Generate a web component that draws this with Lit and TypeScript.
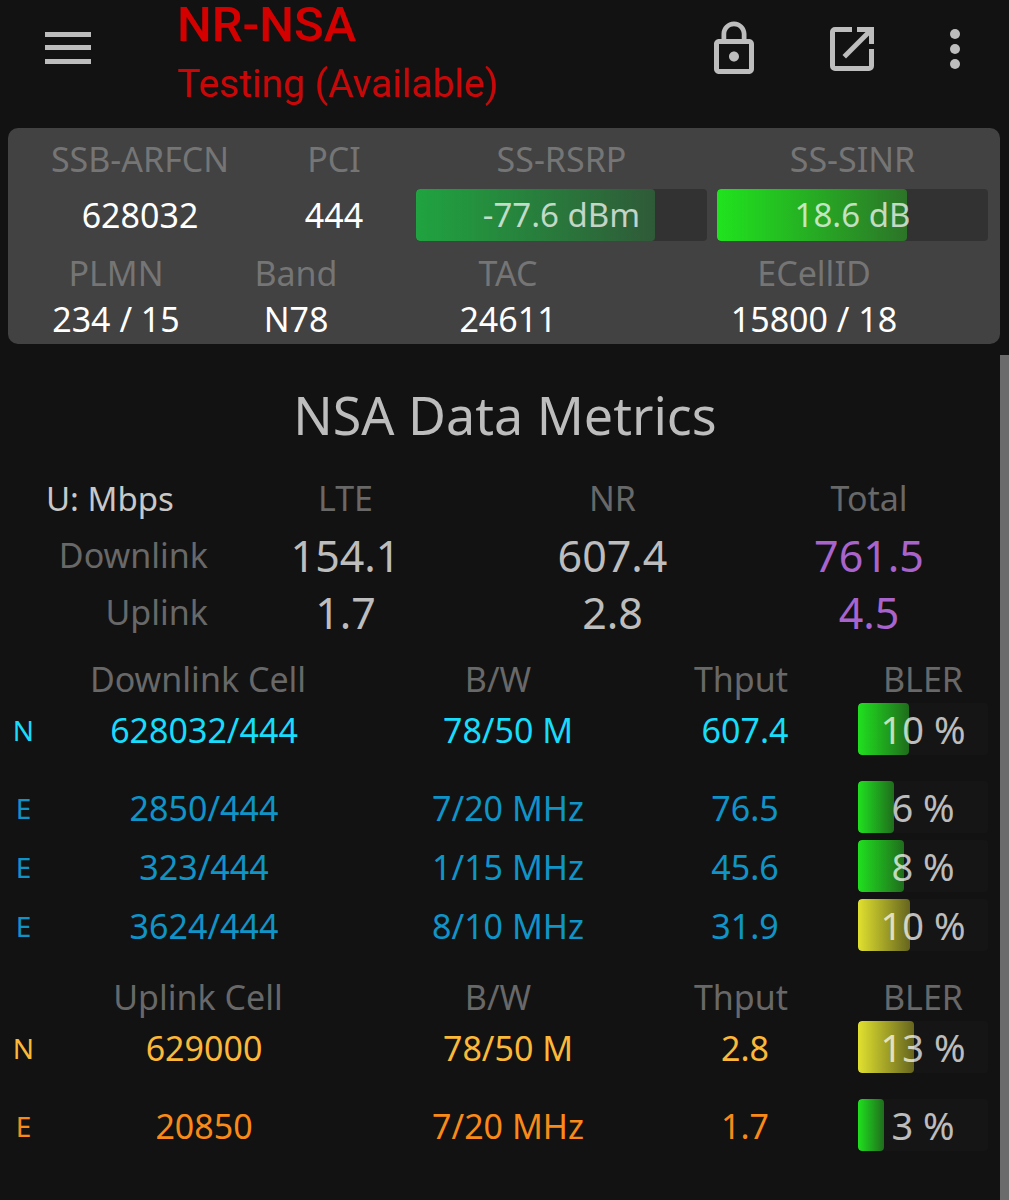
import { LitElement, html, css, svg } from "lit";
import { customElement, property } from "lit/decorators.js";

type Tone = "green" | "forest" | "lime" | "yellow";

interface CellRow {
  tech: string;
  cell: string;
  bw: string;
  thput: string;
  bler: number;
  fill: number;
  tone: Tone;
  color: string;
}

const downlink: CellRow[] = [
  { tech: "N", cell: "628032/444", bw: "78/50 M", thput: "607.4", bler: 10, fill: 39, tone: "green", color: "cyan" },
  { tech: "E", cell: "2850/444", bw: "7/20 MHz", thput: "76.5", bler: 6, fill: 28, tone: "green", color: "blue" },
  { tech: "E", cell: "323/444", bw: "1/15 MHz", thput: "45.6", bler: 8, fill: 35, tone: "green", color: "blue" },
  { tech: "E", cell: "3624/444", bw: "8/10 MHz", thput: "31.9", bler: 10, fill: 40, tone: "yellow", color: "blue" },
];

const uplink: CellRow[] = [
  { tech: "N", cell: "629000", bw: "78/50 M", thput: "2.8", bler: 13, fill: 43, tone: "yellow", color: "amber" },
  { tech: "E", cell: "20850", bw: "7/20 MHz", thput: "1.7", bler: 3, fill: 20, tone: "green", color: "orange" },
];

@customElement("level-bar")
class LevelBar extends LitElement {
  @property() text = "";
  @property() label = "";
  @property() tone: Tone = "green";
  @property({ type: Number }) fill = 0;

  static styles = css`
    :host {
      display: block;
    }
    .track {
      display: grid;
      height: 52px;
      border-radius: 4px;
      overflow: hidden;
      background: var(--track, #151515);
    }
    .fill,
    .text {
      grid-area: 1 / 1;
    }
    .fill {
      border-radius: 4px;
    }
    .text {
      align-self: center;
      text-align: center;
      white-space: nowrap;
      color: rgba(255, 255, 255, 0.72);
    }
    .green {
      background: linear-gradient(to right, #20e01f, #1f6d1c);
    }
    .lime {
      background: linear-gradient(to right, #20e41e, #2c7428);
    }
    .forest {
      background: linear-gradient(to right, #20a340, #2f5a38);
    }
    .yellow {
      background: linear-gradient(to right, #e0e030, #66651e);
    }
  `;

  render() {
    return html`<div class="track" role="meter" aria-label=${this.label} aria-valuenow=${this.fill} aria-valuetext=${this.text}>
      <div class="fill ${this.tone}" style="width:${this.fill}%"></div>
      <div class="text">${this.text}</div>
    </div>`;
  }
}

@customElement("app-root")
class AppRoot extends LitElement {
  static styles = css`
    :host {
      display: flex;
      flex-direction: column;
      min-height: 100vh;
      background: #121212;
      color: #bdbdbd;
      font-family: "Noto Sans", "Open Sans", sans-serif;
      font-size: 34px;
      line-height: 44px;
    }
    .bar {
      display: flex;
      align-items: flex-start;
      padding: 0 39px 19px 38px;
    }
    button {
      display: block;
      margin: 0;
      padding: 0;
      border: 0;
      background: none;
      color: #bdbdbd;
      cursor: pointer;
    }
    svg {
      display: block;
      height: 60px;
      fill: currentColor;
    }
    .menu,
    .tools {
      padding-top: 19px;
    }
    .titles {
      flex: 1;
      padding-left: 79px;
      font-family: Roboto, sans-serif;
      line-height: 50px;
      color: #d40000;
    }
    h1,
    h2,
    p,
    dl,
    dd {
      margin: 0;
    }
    .network {
      font-size: 49px;
      font-weight: 500;
    }
    .status {
      padding-top: 9px;
      font-size: 39px;
      color: #c80808;
    }
    .tools {
      display: flex;
      gap: 58px;
    }
    .card {
      margin: 0 9px 0 8px;
      padding: 9px 0 3px;
      border-radius: 10px;
      background: #424242;
      text-align: center;
      --track: #323232;
    }
    .signal,
    .identity {
      display: grid;
      padding: 0 12px 0 20px;
    }
    .signal {
      grid-template-columns: 224fr 144fr 291fr 271fr;
      column-gap: 10px;
    }
    .identity {
      grid-template-columns: 176fr 184fr 240fr 372fr;
      padding-right: 0;
      padding-top: 10px;
    }
    dt {
      color: #757575;
    }
    dd {
      color: #fff;
    }
    .signal dd {
      padding-top: 8px;
      line-height: 52px;
    }
    level-bar.reading {
      font-size: 33px;
    }
    .identity dd {
      padding-top: 2px;
    }
    main {
      flex: 1;
      margin-top: 11px;
      padding-top: 24px;
      border-right: 9px solid #6b6b6b;
    }
    h2 {
      padding: 0 0 19px 10px;
      font-size: 52px;
      font-weight: 400;
      line-height: 72px;
      text-align: center;
    }
    table {
      width: 100%;
      table-layout: fixed;
      border-collapse: collapse;
      text-align: center;
    }
    th,
    td {
      padding: 0;
      font-weight: 400;
      white-space: nowrap;
    }
    th {
      color: #686868;
    }
    .totals {
      margin-bottom: 14px;
      line-height: 57px;
    }
    .totals td {
      font-size: 43px;
    }
    .totals tbody th {
      padding-right: 4px;
      text-align: right;
    }
    .totals .unit {
      padding-left: 46px;
      font-size: 33px;
      text-align: left;
      color: #c8c8c8;
    }
    .totals .sum {
      padding-right: 8px;
    }
    td.sum {
      color: #a864cc;
    }
    .w-row { width: 21.2%; }
    .w-rate { width: 26.7%; }
    .w-tech { width: 4.7%; }
    .w-cell { width: 31.4%; }
    .w-bw { width: 29.4%; }
    .w-thput { width: 18%; }
    .cells {
      margin-bottom: 15px;
      line-height: 52px;
    }
    .cells thead th {
      line-height: 48px;
    }
    .cells .h-cell { padding-right: 12px; }
    .cells .h-bw { padding-right: 20px; }
    .cells .h-thput { padding-right: 8px; }
    .cells tbody td,
    .cells tbody th {
      padding-top: 1px;
      padding-bottom: 6px;
      color: inherit;
    }
    .cells .primary td,
    .cells .primary th {
      padding-bottom: 25px;
    }
    .cells .tech {
      font-size: 28px;
    }
    .cells .bler {
      padding-left: 23px;
      padding-right: 12px;
    }
    .cells tbody .bler {
      padding-top: 0;
      vertical-align: top;
      font-size: 38px;
    }
    .cyan { color: #18dcfa; }
    .blue { color: #1094c8; }
    .amber { color: #fcb838; }
    .orange { color: #fa8a18; }
  `;

  private cells(title: string, rows: CellRow[]) {
    return html`<table class="cells">
      <colgroup>
        <col class="w-tech" /><col class="w-cell" /><col class="w-bw" /><col class="w-thput" /><col />
      </colgroup>
      <thead>
        <tr>
          <td></td>
          <th class="h-cell" scope="col">${title}</th>
          <th class="h-bw" scope="col">B/W</th>
          <th class="h-thput" scope="col">Thput</th>
          <th class="bler" scope="col">BLER</th>
        </tr>
      </thead>
      <tbody>
        ${rows.map(
          (r) => html`<tr class="${r.color} ${r.tech === "N" ? "primary" : ""}">
            <th class="tech" scope="row">${r.tech}</th>
            <td>${r.cell}</td>
            <td>${r.bw}</td>
            <td>${r.thput}</td>
            <td class="bler">
              <level-bar label="BLER" text="${r.bler} %" .fill=${r.fill} .tone=${r.tone}></level-bar>
            </td>
          </tr>`
        )}
      </tbody>
    </table>`;
  }

  render() {
    return html`
      <header class="bar">
        <div class="menu">
          <button type="button" aria-label="Menu">
            <svg viewBox="0 0 60 60" width="60">${svg`<path d="M7 13h46v5H7zM7 26h46v5H7zM7 40h46v5H7z"/>`}</svg>
          </button>
        </div>
        <div class="titles">
          <h1 class="network">NR-NSA</h1>
          <p class="status">Testing (Available)</p>
        </div>
        <div class="tools">
          <button type="button" aria-label="Lock">
            <svg viewBox="0 0 24 24" width="60"><path d="M12 17c1.1 0 2-.9 2-2s-.9-2-2-2-2 .9-2 2 .9 2 2 2zm6-9h-1V6c0-2.76-2.24-5-5-5S7 3.24 7 6v2H6c-1.1 0-2 .9-2 2v10c0 1.1.9 2 2 2h12c1.1 0 2-.9 2-2V10c0-1.1-.9-2-2-2zM8.9 6c0-1.71 1.39-3.1 3.1-3.1s3.1 1.39 3.1 3.1v2H8.9V6zM18 20H6V10h12v10z"/></svg>
          </button>
          <button type="button" aria-label="Open in new window">
            <svg viewBox="0 0 60 60" width="60"><path d="M30 8H13a5 5 0 0 0-5 5v34a5 5 0 0 0 5 5h34a5 5 0 0 0 5-5V30h-5v17H13V13h17zM35 8v5h8.500L20.500 36l3.500 3.500 23-23V25h5V8z"/></svg>
          </button>
          <button type="button" aria-label="More options">
            <svg viewBox="6 0 12 24" width="30"><circle cx="12" cy="6" r="2"/><circle cx="12" cy="12" r="2"/><circle cx="12" cy="18" r="2"/></svg>
          </button>
        </div>
      </header>

      <section class="card" aria-label="Serving cell">
        <dl class="signal">
          <div><dt>SSB-ARFCN</dt><dd>628032</dd></div>
          <div><dt>PCI</dt><dd>444</dd></div>
          <div><dt>SS-RSRP</dt><dd><level-bar class="reading" label="SS-RSRP" text="-77.6 dBm" .fill=${82} .tone=${"forest"}></level-bar></dd></div>
          <div><dt>SS-SINR</dt><dd><level-bar class="reading" label="SS-SINR" text="18.6 dB" .fill=${70} .tone=${"lime"}></level-bar></dd></div>
        </dl>
        <dl class="identity">
          <div><dt>PLMN</dt><dd>234 / 15</dd></div>
          <div><dt>Band</dt><dd>N78</dd></div>
          <div><dt>TAC</dt><dd>24611</dd></div>
          <div><dt>ECellID</dt><dd>15800 / 18</dd></div>
        </dl>
      </section>

      <main>
        <h2>NSA Data Metrics</h2>
        <table class="totals">
          <colgroup><col class="w-row" /><col class="w-rate" /><col class="w-rate" /><col /></colgroup>
          <thead>
            <tr>
              <th class="unit" scope="col">U: Mbps</th>
              <th scope="col">LTE</th>
              <th scope="col">NR</th>
              <th class="sum" scope="col">Total</th>
            </tr>
          </thead>
          <tbody>
            <tr><th scope="row">Downlink</th><td>154.1</td><td>607.4</td><td class="sum">761.5</td></tr>
            <tr><th scope="row">Uplink</th><td>1.7</td><td>2.8</td><td class="sum">4.5</td></tr>
          </tbody>
        </table>
        ${this.cells("Downlink Cell", downlink)}
        ${this.cells("Uplink Cell", uplink)}
      </main>
    `;
  }
}
